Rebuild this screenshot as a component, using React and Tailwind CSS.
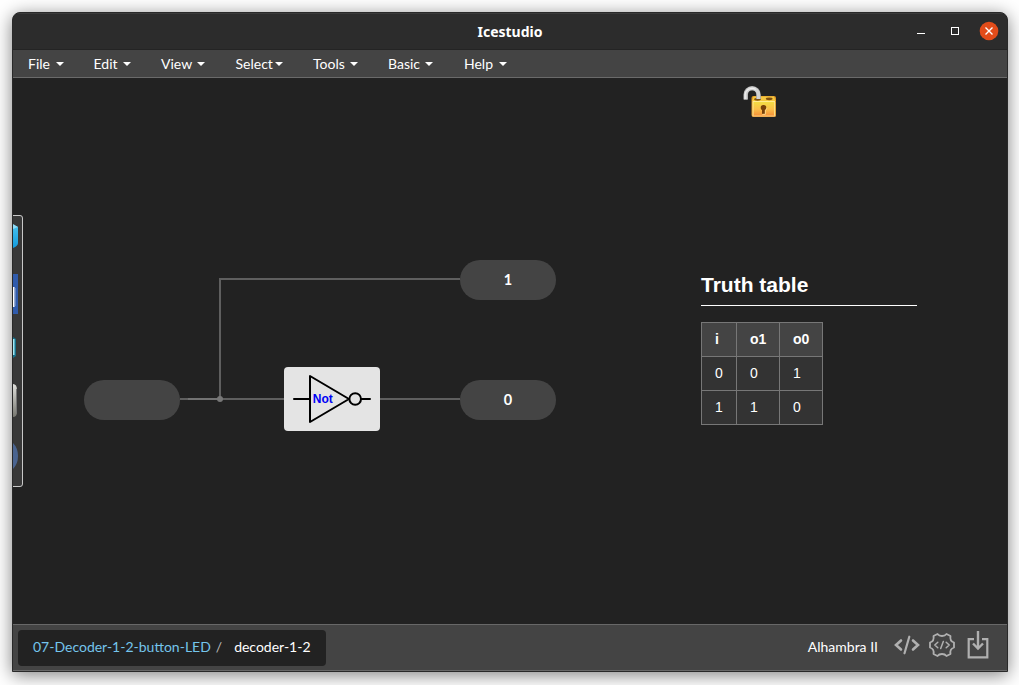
const MENUS = [
  { label: "File", width: "w-[65.5px]", gap: "gap-[6px]" },
  { label: "Edit", width: "w-[67.5px]", gap: "gap-[5px]" },
  { label: "View", width: "w-[74.5px]", gap: "gap-[5px]" },
  { label: "Select", width: "w-[77.5px]", gap: "gap-[2px]" },
  { label: "Tools", width: "w-[75px]", gap: "gap-[5px]" },
  { label: "Basic", width: "w-[76px]", gap: "gap-[5px]" },
  { label: "Help", width: "w-[60px]", gap: "gap-[6px]" },
];

const ROWS = [
  ["0", "0", "1"],
  ["1", "1", "0"],
];

function Caret() {
  return (
    <svg width="8" height="4" viewBox="0 0 8 4" className="mt-px shrink-0">
      <path d="M0 0h8L4 4z" fill="#fff" />
    </svg>
  );
}

function TitleBar() {
  return (
    <header className="relative flex h-[36px] shrink-0 items-center justify-end border-t border-[#3b3b3b] bg-[#2c2c2c] pr-[8px] pb-px">
      <h1 className="absolute inset-x-0 top-[8px] text-center font-['Noto_Sans',sans-serif] text-[14px] leading-5 font-bold text-white">
        Icestudio
      </h1>
      <div className="flex items-center">
        <svg width="8" height="10" viewBox="0 0 8 10" className="mr-[26px]" shapeRendering="crispEdges">
          <path d="M0 7h8v1H0z" fill="#fff" />
        </svg>
        <svg width="8" height="8" viewBox="0 0 8 8" className="mr-[20px]" shapeRendering="crispEdges">
          <path d="M.5.5h7v7h-7z" fill="none" stroke="#fff" />
        </svg>
        <svg width="20" height="20" viewBox="0 0 20 20">
          <circle cx="10" cy="10" r="9.3" fill="#e24c1a" />
          <path d="M6.500 6.500l7 7M13.500 6.500l-7 7" stroke="#fff" strokeWidth="1.4" />
        </svg>
      </div>
    </header>
  );
}

function MenuBar() {
  return (
    <nav className="flex h-[29px] shrink-0 items-center border-t border-b border-t-[#242424] border-b-[#6a6a6a] bg-[#444] pl-[15px] font-[Lato,sans-serif] text-[14px] text-white">
      {MENUS.map((m) => (
        <div key={m.label} className={`flex shrink-0 items-center ${m.width} ${m.gap}`}>
          <span>{m.label}</span>
          <Caret />
        </div>
      ))}
    </nav>
  );
}

function Padlock() {
  return (
    <svg className="absolute top-[8px] left-[729px]" width="36" height="34" viewBox="0 0 36 34">
      <defs>
        <linearGradient id="lockBody" x1="0" y1="0" x2="0" y2="1">
          <stop offset="0" stopColor="#f2dc43" />
          <stop offset="0.5" stopColor="#fbc04a" />
          <stop offset="1" stopColor="#f59037" />
        </linearGradient>
      </defs>
      <rect x="9.5" y="10" width="24.5" height="21" rx="2" fill="#dc9426" />
      <path d="M11.500 10.500h20.500l1.500 4.500h-23.500z" fill="#f5c840" />
      <ellipse cx="27.200" cy="12.800" rx="3.400" ry="1.400" fill="#80500f" />
      <ellipse cx="15.500" cy="13.300" rx="3.400" ry="1.400" fill="#80500f" />
      <rect x="10.700" y="16" width="22" height="14" fill="url(#lockBody)" />
      <path d="M10.500 15.500h22.500M11 16v14M32.700 16v14" stroke="#ffeb91" fill="none" />
      <path d="M10.500 30h23" stroke="#ffc77e" />
      <path d="M3.700 13.500V8.700a6.400 6.400 0 0 1 12.800 0V13" fill="none" stroke="#a0a0a0" strokeWidth="4.600" />
      <path d="M3.700 13.500V8.700a6.400 6.400 0 0 1 12.800 0V13" fill="none" stroke="#d2d2d2" strokeWidth="3.400" />
      <path d="M3.200 13V8.500a6.800 6.800 0 0 1 10.500-5" fill="none" stroke="#eee" strokeWidth="1.200" />
      <path d="M21.500 19a2.700 2.700 0 0 0-2.800 2.700c0 1.300.7 2 1.300 2.300V28h3v-4c.8-.3 1.300-1 1.300-2.300a2.700 2.700 0 0 0-2.800-2.700z" fill="#774009" />
      <path d="M24.800 21.800c0 1.300-.7 2-1.500 2.400V28.300h-3" fill="none" stroke="#ffe094" strokeWidth=".9" />
    </svg>
  );
}

function SidePanel() {
  return (
    <svg className="absolute top-[137px] left-0" width="10" height="272" viewBox="0 0 10 272">
      <defs>
        <linearGradient id="mouse" x1="0" y1="0" x2="0" y2="1">
          <stop offset="0" stopColor="#e0e0dc" />
          <stop offset="1" stopColor="#777770" />
        </linearGradient>
        <linearGradient id="cube" x1="0" y1="0" x2="0" y2="1">
          <stop offset="0" stopColor="#48c1ee" />
          <stop offset="1" stopColor="#129bdd" />
        </linearGradient>
      </defs>
      <path d="M0 0h7q3 0 3 3v266q0 3-3 3H0z" fill="#383838" />
      <path d="M0 .5h7q2.500 0 2.500 2.500v266q0 2.500-2.500 2.500H0" fill="none" stroke="#c8c8c8" />
      <path d="M0 10l5 2v16q0 3-5 5z" fill="url(#cube)" />
      <path d="M0 9l5 3-5 2z" fill="#8fdcf7" />
      <path d="M0 59h5v40H0z" fill="#305bac" />
      <path d="M0 72h1.500v20H0z" fill="#fff" />
      <path d="M2 73v18" stroke="#8fa5cd" />
      <path d="M0 122l3 2v17l-3 2z" fill="#167089" />
      <path d="M0 124h1.500v16H0z" fill="#a3e8f6" />
      <path d="M0 169q4 0 4 6v22q0 5-4 5z" fill="url(#mouse)" />
      <path d="M3.500 174v24" stroke="#777" />
      <path d="M0 228q5 5 5 13t-5 13z" fill="#4a6490" />
    </svg>
  );
}

function Port({ className, children }) {
  return (
    <div
      className={`absolute flex h-[40px] w-[96px] items-center justify-center rounded-full bg-[#444] font-[Lato,sans-serif] text-[14.5px] font-bold text-white ${className}`}
    >
      {children}
    </div>
  );
}

function NotGate() {
  return (
    <svg className="absolute top-[289px] left-[271px] rounded-[4px]" width="96" height="64" viewBox="0 0 96 64">
      <rect width="96" height="64" fill="#e4e4e4" />
      <g fill="none" stroke="#000" strokeWidth="2" strokeLinejoin="round" strokeLinecap="round">
        <path d="M10 32h16M26 9v46l39-23zM77.500 32H86" />
        <circle cx="71.200" cy="32" r="5.800" />
      </g>
      <text x="28.800" y="36" fill="#0000f5" fontSize="12" fontWeight="700" fontFamily="'Liberation Sans', sans-serif">
        Not
      </text>
    </svg>
  );
}

function TruthTable() {
  return (
    <section className="absolute top-[193px] left-[688px] w-[216px] font-['Liberation_Sans',sans-serif] text-white">
      <h2 className="h-[35px] border-b border-white pt-px text-[21px] leading-[26px] font-bold">Truth table</h2>
      <table className="mt-[16px] w-[122px] table-fixed border-collapse text-[14px] leading-[20px]">
        <colgroup>
          <col className="w-[35px]" />
          <col className="w-[43px]" />
          <col className="w-[43px]" />
        </colgroup>
        <thead>
          <tr className="h-[34px] bg-[#444]">
            {["i", "o1", "o0"].map((h) => (
              <th key={h} className="border border-[#777] p-0 pb-[2px] pl-[13px] text-left font-bold">
                {h}
              </th>
            ))}
          </tr>
        </thead>
        <tbody>
          {ROWS.map((row, i) => (
            <tr key={i} className="h-[34px] bg-[#333]">
              {row.map((v, j) => (
                <td key={j} className="border border-[#777] p-0 pb-[2px] pl-[13px]">
                  {v}
                </td>
              ))}
            </tr>
          ))}
        </tbody>
      </table>
    </section>
  );
}

function Canvas() {
  return (
    <main className="relative min-h-0 flex-1 overflow-hidden bg-[#222]">
      <svg className="absolute inset-0" width="994" height="546" viewBox="0 0 994 546">
        <path d="M167 321h104M367 321h80M207 321V201h240" fill="none" stroke="#5f5f5f" strokeWidth="2" />
        <path d="M175 321h32" stroke="#737373" strokeWidth="2" />
        <circle cx="207" cy="321" r="3" fill="#777" />
      </svg>
      <SidePanel />
      <Padlock />
      <Port className="top-[302px] left-[71px]" />
      <Port className="top-[182px] left-[447px]">1</Port>
      <Port className="top-[302px] left-[447px]">0</Port>
      <NotGate />
      <TruthTable />
    </main>
  );
}

function FooterIcons() {
  return (
    <div className="flex items-center text-[#b0b0b0]">
      <svg width="26" height="20" viewBox="0 0 26 20" className="mb-[3px]" fill="none" stroke="currentColor" strokeWidth="2.600" strokeLinecap="round">
        <path d="M7 5.500L2 10l5 4.500M19 5.500l5 4.500-5 4.500" />
        <path d="M15.300 1.700L10.500 18.300" strokeWidth="2.200" />
      </svg>
      <svg width="26" height="26" viewBox="0 0 26 26" className="mb-[3px] ml-[9px]" fill="none" stroke="currentColor" strokeWidth="1.800" strokeLinejoin="round" strokeLinecap="round">
        <path d="M8.500 2Q10 4 13 4t4.500-2L21.500 4Q20.500 9 25 10.500v5Q20.500 17 21.500 22l-4 2Q16 22 13 22t-4.500 2l-4-2Q5.500 17 1 15.500v-5Q5.500 9 4.500 4z" />
        <path d="M8.800 10.200L5.800 13l3 2.800M17.200 10.200l3 2.800-3 2.800M14.300 9.500l-2.600 7" strokeWidth="1.500" />
      </svg>
      <svg width="22" height="28" viewBox="0 0 22 28" className="mb-[3px] ml-[12px]" fill="none" stroke="currentColor">
        <path d="M7 8.200H1.700v18.200h18.600V8.200H15" strokeWidth="2.200" />
        <path d="M11 0v17" strokeWidth="2.400" />
        <path d="M6 12.500l5 5 5-5" strokeWidth="2.400" />
      </svg>
    </div>
  );
}

function Footer() {
  return (
    <footer className="flex h-[47px] shrink-0 items-center justify-between border-t border-b border-[#686868] bg-[#444] pr-[18px] pl-[5px] font-[Lato,sans-serif] text-[14px] text-white">
      <div className="flex h-[36px] w-[308px] items-center rounded-[4px] bg-[#222] pb-[2px] pl-[15px]">
        <span className="text-[#75c5ec]">07-Decoder-1-2-button-LED</span>
        <span className="ml-[5px] text-[#bbb]">/</span>
        <span className="ml-[12px]">decoder-1-2</span>
      </div>
      <div className="flex items-center pb-[2px]">
        <span className="mr-[16px]">Alhambra II</span>
        <FooterIcons />
      </div>
    </footer>
  );
}

export default function App() {
  return (
    <div className="flex h-[685px] w-[1019px] overflow-hidden bg-white p-[12px] pr-[11px] pb-[13px]">
      <div className="flex h-[660px] w-[996px] flex-col overflow-hidden rounded-t-[8px] border border-[#292929] bg-[#222] shadow-[0_3px_18px_rgba(0,0,0,0.5)]">
        <TitleBar />
        <MenuBar />
        <Canvas />
        <Footer />
      </div>
    </div>
  );
}
